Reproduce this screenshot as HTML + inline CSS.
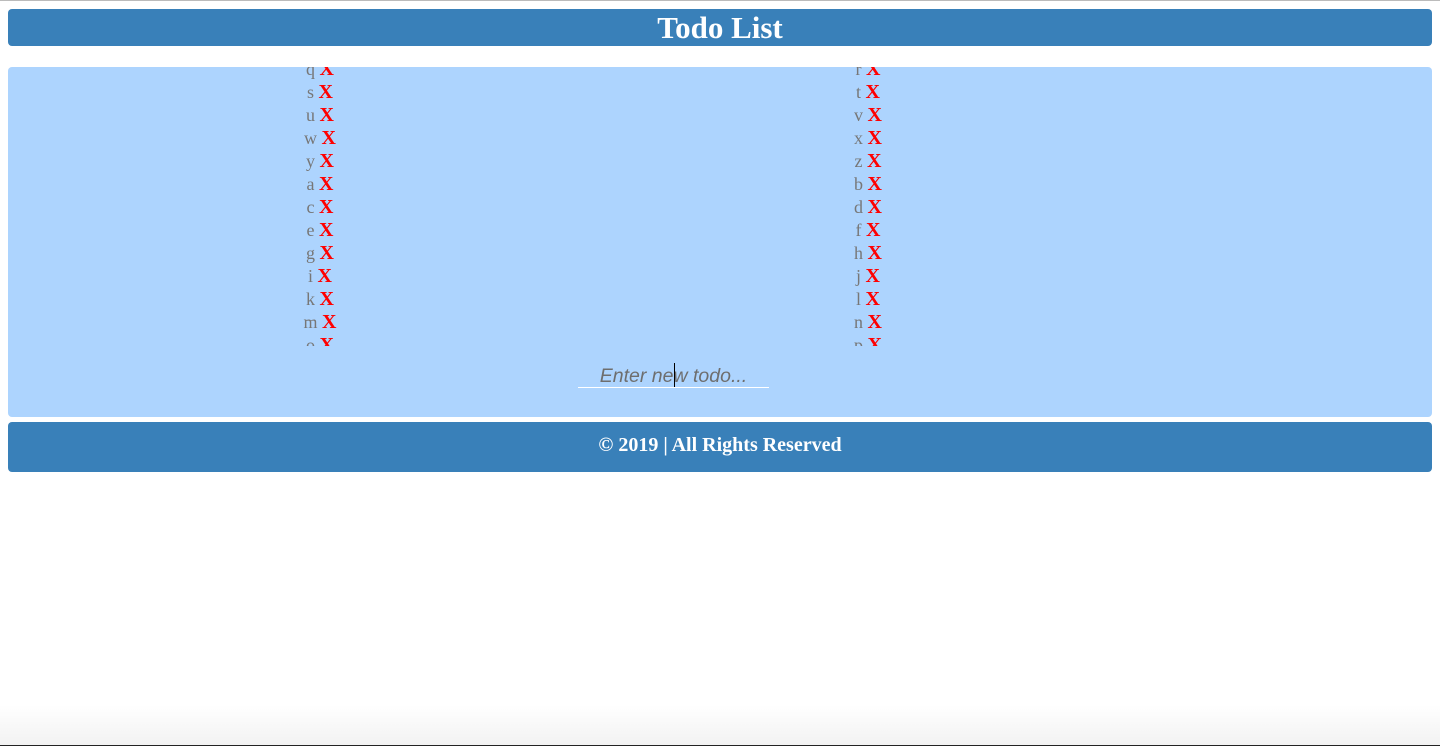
<!DOCTYPE html>
<html><head><style>
html,body{margin:0;padding:0;width:1440px;height:746px;overflow:hidden;background:#fff;position:relative}
.top{position:absolute;left:0;top:0;width:1440px;height:1px;background:#bbb}
.hdr{position:absolute;left:8px;top:9px;width:1424px;height:37px;background:#3980b9;border-radius:4px;color:#fff;font:bold 31px "Liberation Serif",serif;text-align:center;line-height:37px}
.main{position:absolute;left:8px;top:67px;width:1424px;height:350px;background:#add4fe;border-radius:4px}
.clip{position:absolute;left:0;top:0;width:1424px;height:279px;overflow:hidden}
.col{position:absolute;top:-9px;width:200px}
.col div{height:23px;line-height:23px;text-align:center;font:18px "Liberation Serif",serif;color:#777}
.col b{font-weight:bold;color:#f00;font-size:20px}
.inp{position:absolute;left:570px;top:298px;width:191px;height:22px;border-bottom:1px solid #fff;font:italic 19.5px "Liberation Sans",sans-serif;color:#6e6e6e;text-align:center;line-height:22px}
.cur{position:absolute;left:666px;top:296px;width:1px;height:24px;background:#000}
.ftr{position:absolute;left:8px;top:422px;width:1424px;height:50px;background:#3980b9;border-radius:4px;color:#fff;font:bold 20px "Liberation Serif",serif;text-align:center;line-height:46px}
.sh{position:absolute;left:0;top:705px;width:1440px;height:40px;background:linear-gradient(#fff,#f2f2f2)}
.bl{position:absolute;left:0;top:745px;width:1440px;height:1px;background:#222}
</style></head><body>
<div class="top"></div>
<div class="hdr">Todo List</div>
<div class="main">
<div class="clip">
<div class="col" style="left:212px">
<div>q <b>X</b></div><div>s <b>X</b></div><div>u <b>X</b></div><div>w <b>X</b></div><div>y <b>X</b></div><div>a <b>X</b></div><div>c <b>X</b></div><div>e <b>X</b></div><div>g <b>X</b></div><div>i <b>X</b></div><div>k <b>X</b></div><div>m <b>X</b></div><div>o <b>X</b></div>
</div>
<div class="col" style="left:760px">
<div>r <b>X</b></div><div>t <b>X</b></div><div>v <b>X</b></div><div>x <b>X</b></div><div>z <b>X</b></div><div>b <b>X</b></div><div>d <b>X</b></div><div>f <b>X</b></div><div>h <b>X</b></div><div>j <b>X</b></div><div>l <b>X</b></div><div>n <b>X</b></div><div>p <b>X</b></div>
</div>
</div>
<div class="inp">Enter new todo...</div>
<div class="cur"></div>
</div>
<div class="ftr">© 2019 | All Rights Reserved</div>
<div class="sh"></div>
<div class="bl"></div>
</body></html>
